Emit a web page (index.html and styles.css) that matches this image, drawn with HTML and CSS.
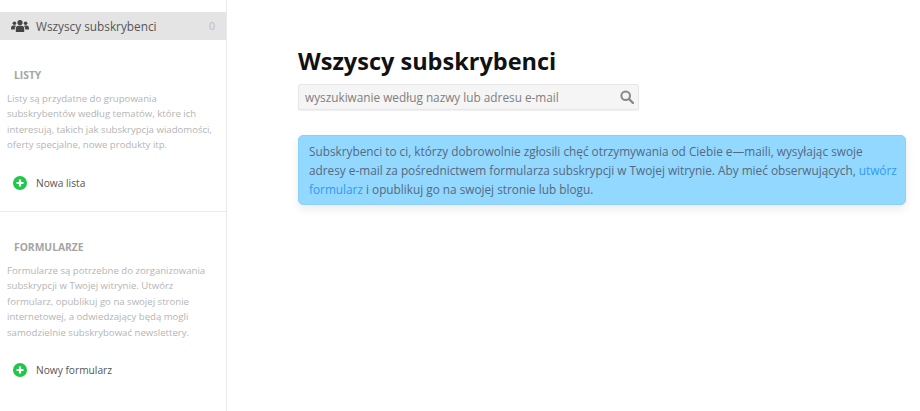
FILE: index.html
```html
<!DOCTYPE html>
<html lang="pl">
<head>
<meta charset="utf-8">
<title>Wszyscy subskrybenci</title>
<link rel="stylesheet" href="styles.css">
</head>
<body>
<div class="app">
  <aside class="sidebar">
    <div class="all-row">
      <svg class="users-icon" viewBox="0 0 18 12" width="18" height="12"><g fill="#444"><circle cx="9" cy="2.6" r="2.6"/><circle cx="3.4" cy="3.2" r="1.8"/><circle cx="14.6" cy="3.2" r="1.8"/><path d="M4.8 12V8.6C4.8 6.8 6 5.8 7.4 5.8h3.2c1.4 0 2.6 1 2.6 2.8V12z"/><path d="M0 8.8C0 6.6.9 5.6 2.2 5.6h2c.3 0 .6.1.8.3C4.200 6.600 3.800 7.500 3.800 8.800V9.600H0z"/><path d="M18 8.800C18 6.600 17.100 5.600 15.800 5.600h-2c-.3 0-.6.1-.8.3.8.7 1.200 1.600 1.200 2.900v.8H18z"/></g></svg>
      <span class="all-label">Wszyscy subskrybenci</span>
      <span class="all-count">0</span>
    </div>
    <section class="group group-lists">
      <h3 class="group-title">LISTY</h3>
      <p class="group-text">Listy są przydatne do grupowania subskrybentów według tematów, które ich interesują, takich jak subskrypcja wiadomości, oferty specjalne, nowe produkty itp.</p>
      <div class="add-row">
        <svg class="plus-icon" viewBox="0 0 14 14" width="14" height="14"><circle cx="7" cy="7" r="7" fill="#1fc84a"/><path d="M7 3.500v7M3.500 7h7" stroke="#fff" stroke-width="2.200"/></svg>
        <span>Nowa lista</span>
      </div>
    </section>
    <section class="group group-forms">
      <h3 class="group-title">FORMULARZE</h3>
      <p class="group-text">Formularze są potrzebne do zorganizowania subskrypcji w Twojej witrynie. Utwórz formularz, opublikuj go na swojej stronie internetowej, a odwiedzający będą mogli samodzielnie subskrybować newslettery.</p>
      <div class="add-row">
        <svg class="plus-icon" viewBox="0 0 14 14" width="14" height="14"><circle cx="7" cy="7" r="7" fill="#1fc84a"/><path d="M7 3.500v7M3.500 7h7" stroke="#fff" stroke-width="2.200"/></svg>
        <span>Nowy formularz</span>
      </div>
    </section>
  </aside>
  <main class="content">
    <h1 class="title">Wszyscy subskrybenci</h1>
    <div class="search">
      <span class="search-text">wyszukiwanie według nazwy lub adresu e-mail</span>
      <svg class="search-icon" viewBox="0 0 14 14" width="14" height="14"><circle cx="5.700" cy="5.700" r="4.300" fill="none" stroke="#888" stroke-width="2"/><path d="M9 9l4 4" stroke="#888" stroke-width="2.400" stroke-linecap="round"/></svg>
    </div>
    <div class="notice">Subskrybenci to ci, którzy dobrowolnie zgłosili chęć otrzymywania od Ciebie e—maili, wysyłając swoje adresy e-mail za pośrednictwem formularza subskrypcji w Twojej witrynie. Aby mieć obserwujących, <a class="notice-link">utwórz formularz</a> i opublikuj go na swojej stronie lub blogu.</div>
  </main>
</div>
</body>
</html>
```
FILE: styles.css
```css
* { box-sizing: border-box; }
html, body { margin: 0; height: 100%; background: #fff; overflow: hidden; }
body { font-family: "Open Sans", "Noto Sans", sans-serif; }
.app { display: flex; height: 411px; }
.sidebar { width: 227px; flex: none; border-right: 1px solid #e9e9e9; padding-top: 12px; }
.all-row { height: 28px; background: #e4e4e4; display: flex; align-items: center; padding: 0 11px; }
.users-icon { flex: none; }
.all-label { margin-left: 7px; font-size: 11.800px; color: #555; flex: 1; }
.all-count { font-size: 10.500px; color: #bbb; }
.group { padding: 0 0 0 7px; }
.group-lists { padding-top: 28px; height: 172px; border-bottom: 1px solid #ebebeb; }
.group-forms { padding-top: 28px; }
.group-title { margin: 0 0 0 7px; font-size: 10.300px; line-height: 14px; font-weight: 700; color: #a5a5a5; }
.group-text { margin: 9px 0 0; width: 208px; font-size: 9.600px; line-height: 15.400px; color: #b5b5b5; }
.add-row { display: flex; align-items: center; gap: 9px; padding-left: 6px; margin-top: 20px; font-size: 10.200px; color: #555; height: 20px; }
.plus-icon { flex: none; }
.content { flex: 1; padding: 47px 0 0 71px; }
.title { margin: 0; font-size: 23.500px; line-height: 28px; font-weight: 700; color: #111; }
.search { margin-top: 9px; width: 341px; height: 26px; background: #f5f5f5; border: 1px solid #e6e6e6; border-radius: 2px; display: flex; align-items: center; justify-content: space-between; padding: 0 4px 0 6px; box-shadow: 0 1px 1px rgba(0,0,0,.06); }
.search-text { font-size: 11.800px; color: #808080; }
.notice { margin-top: 25px; width: 608px; height: 70px; padding: 6px 7px 6px 10px; background: #93d8ff; border: 1px solid #8ccffa; border-radius: 5px; box-shadow: 0 4px 10px rgba(0,0,0,.08); font-size: 11.800px; line-height: 18.900px; color: #56697d; }
.notice-link { color: #2f9bf5; }
```
